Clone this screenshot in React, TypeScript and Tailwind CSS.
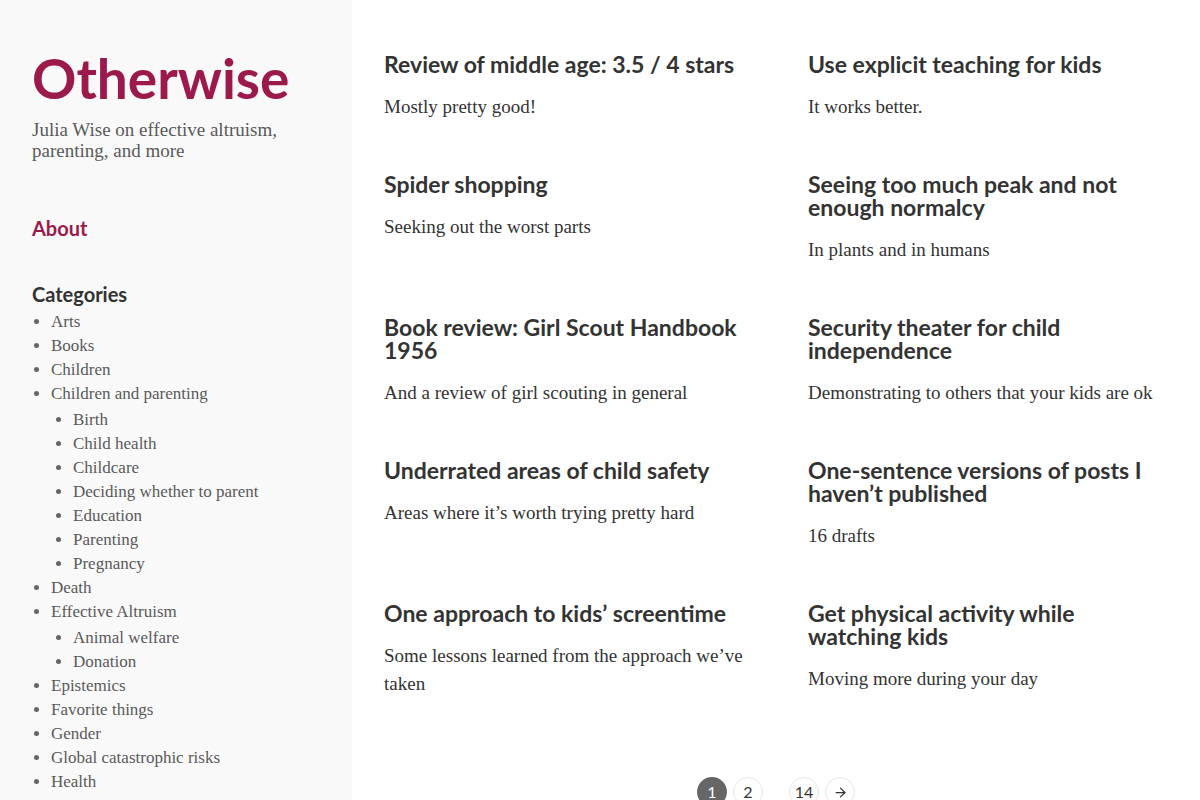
import { ArrowRight } from "lucide-react";

const posts = [
  { title: "Review of middle age: 3.5 / 4 stars", blurb: "Mostly pretty good!" },
  { title: "Use explicit teaching for kids", blurb: "It works better." },
  { title: "Spider shopping", blurb: "Seeking out the worst parts" },
  { title: "Seeing too much peak and not enough normalcy", blurb: "In plants and in humans" },
  { title: "Book review: Girl Scout Handbook 1956", blurb: "And a review of girl scouting in general" },
  { title: "Security theater for child independence", blurb: "Demonstrating to others that your kids are ok" },
  { title: "Underrated areas of child safety", blurb: "Areas where it\u2019s worth trying pretty hard" },
  { title: "One-sentence versions of posts I haven\u2019t published", blurb: "16 drafts" },
  { title: "One approach to kids\u2019 screentime", blurb: "Some lessons learned from the approach we\u2019ve taken" },
  { title: "Get physical activity while watching kids", blurb: "Moving more during your day" },
];

interface Category {
  name: string;
  children?: string[];
}

const categories: Category[] = [
  { name: "Arts" },
  { name: "Books" },
  { name: "Children" },
  {
    name: "Children and parenting",
    children: ["Birth", "Child health", "Childcare", "Deciding whether to parent", "Education", "Parenting", "Pregnancy"],
  },
  { name: "Death" },
  { name: "Effective Altruism", children: ["Animal welfare", "Donation"] },
  { name: "Epistemics" },
  { name: "Favorite things" },
  { name: "Gender" },
  { name: "Global catastrophic risks" },
  { name: "Health" },
];

const serif = "font-['Liberation_Serif',serif]";
const sans = "font-['Lato',sans-serif]";

function Sidebar() {
  return (
    <aside className="w-[352px] shrink-0 bg-[#f9f9f9] px-8 pt-[46px]">
      <h1 className={`${sans} text-[55px] font-bold leading-[64px] text-[#9c1a4b]`}>Otherwise</h1>
      <p className={`${serif} mt-[9px] text-[19px] leading-[21px] text-[#595959]`}>
        Julia Wise on effective altruism,
        <br />
        parenting, and more
      </p>

      {/* Nav */}
      <a className={`${sans} mt-[55px] block text-[20px] font-bold leading-[24px] text-[#9c1a4b]`}>About</a>

      {/* Categories */}
      <h2 className={`${sans} mt-[42px] text-[20px] font-bold leading-[24px] text-[#333]`}>Categories</h2>
      <ul className={`${serif} mt-[4px] list-disc pl-[19px] text-[17px] leading-[24px] text-[#595959] marker:text-[#666]`}>
        {categories.map((c) => (
          <li key={c.name}>
            {c.name}
            {c.children && (
              <ul className="mt-[2px] list-disc pl-[22px]">
                {c.children.map((s) => (
                  <li key={s}>{s}</li>
                ))}
              </ul>
            )}
          </li>
        ))}
      </ul>
    </aside>
  );
}

function Pagination() {
  const circle = "flex h-[30px] w-[30px] items-center justify-center rounded-full";
  return (
    <div className={`${sans} mt-[77px] flex items-center justify-center gap-[6px] text-[16px] text-[#333]`}>
      <span className={`${circle} bg-[#666] text-white`}>1</span>
      <span className={`${circle} border border-[#e6e6e6]`}>2</span>
      <span className="px-[1px] pt-[10px] text-[#666]">…</span>
      <span className={`${circle} border border-[#e6e6e6]`}>14</span>
      <span className={`${circle} border border-[#e6e6e6]`}>
        <ArrowRight size={15} strokeWidth={2} />
      </span>
    </div>
  );
}

export default function App() {
  return (
    <div className="flex h-[800px] w-full overflow-hidden bg-white">
      <Sidebar />
      <main className="flex-1 px-8 pt-[53px]">
        <div className="grid grid-cols-2 gap-x-16 gap-y-[52px]">
          {posts.map((p) => (
            <article key={p.title}>
              <h2 className={`${sans} text-[23px] font-bold leading-[23px] text-[#333]`}>{p.title}</h2>
              <p className={`${serif} mt-[17px] text-[19px] leading-[28px] text-[#333]`}>{p.blurb}</p>
            </article>
          ))}
        </div>
        <Pagination />
      </main>
    </div>
  );
}
